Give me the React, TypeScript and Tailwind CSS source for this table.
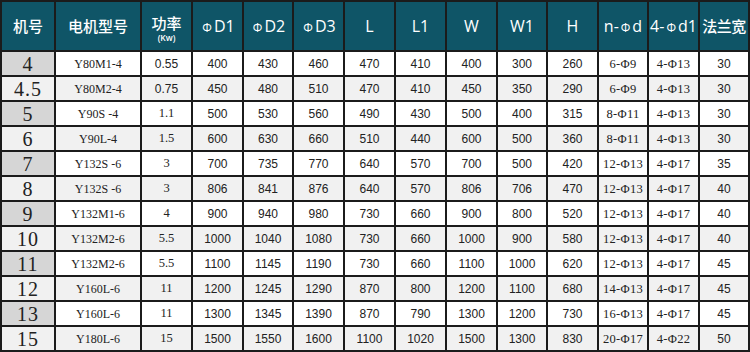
const rows: (string | number)[][] = [
  ["4", "Y80M1-4", "0.55", 400, 430, 460, 470, 410, 400, 300, 260, "6-Φ9", "4-Φ13", 30],
  ["4.5", "Y80M2-4", "0.75", 450, 480, 510, 470, 410, 450, 350, 290, "6-Φ9", "4-Φ13", 30],
  ["5", "Y90S -4", "1.1", 500, 530, 560, 490, 430, 500, 400, 315, "8-Φ11", "4-Φ13", 30],
  ["6", "Y90L-4", "1.5", 600, 630, 660, 510, 440, 600, 500, 360, "8-Φ11", "4-Φ13", 30],
  ["7", "Y132S -6", "3", 700, 735, 770, 640, 570, 700, 500, 420, "12-Φ13", "4-Φ17", 35],
  ["8", "Y132S -6", "3", 806, 841, 876, 640, 570, 806, 706, 470, "12-Φ13", "4-Φ17", 40],
  ["9", "Y132M1-6", "4", 900, 940, 980, 730, 660, 900, 800, 520, "12-Φ13", "4-Φ17", 40],
  ["10", "Y132M2-6", "5.5", 1000, 1040, 1080, 730, 660, 1000, 900, 580, "12-Φ13", "4-Φ17", 40],
  ["11", "Y132M2-6", "5.5", 1100, 1145, 1190, 730, 660, 1100, 1000, 620, "12-Φ13", "4-Φ17", 45],
  ["12", "Y160L-6", "11", 1200, 1245, 1290, 870, 800, 1200, 1100, 680, "14-Φ13", "4-Φ17", 45],
  ["13", "Y160L-6", "11", 1300, 1345, 1390, 870, 790, 1300, 1200, 730, "16-Φ13", "4-Φ17", 45],
  ["15", "Y180L-6", "15", 1500, 1550, 1600, 1100, 1020, 1500, 1300, 830, "20-Φ17", "4-Φ22", 50],
];

const widths = [54, 86, 51, 51, 50, 51, 51, 51, 51, 50, 51, 50, 51, 50];

// [prefix, rest] — the Φ is drawn thinner than the letters in the picture
const heads: [string, string][] = [
  ["Φ", "D1"], ["Φ", "D2"], ["Φ", "D3"], ["", "L"], ["", "L1"], ["", "W"], ["", "W1"], ["", "H"],
  ["n-Φ", "d"], ["4-Φ", "d1"],
];

const serif = "font-['Liberation_Serif','Noto_Sans_CJK_SC',serif]";
const sans = "font-['Liberation_Sans',sans-serif]";

function cellClass(ci: number, ri: number) {
  if (ci === 0) return `${serif} text-[20px] tracking-[1px] ${ri % 2 === 0 ? "bg-[#d6d6d6]" : ""}`;
  if (ci === 1) return `${serif} text-[12px]`;
  if (ci === 2) return ri < 2 ? `${sans} text-[12px]` : `${serif} text-[12.5px]`;
  if (ci === 11 || ci === 12) return `${serif} text-[12.5px] tracking-[0.3px] pt-[2px]`;
  return `${sans} text-[12px]`;
}

export default function App() {
  return (
    <div className="w-[750px] h-[352px] bg-white overflow-hidden">
      <table className="w-[750px] table-fixed border-collapse border-2 border-[#1b1b1b] text-center text-[#222]">
        <colgroup>
          {widths.map((w, i) => (
            <col key={i} style={{ width: w }} />
          ))}
        </colgroup>
        <thead>
          <tr className="h-[50px] bg-[#0f5567] text-white font-['Open_Sans','Noto_Sans_CJK_SC',sans-serif]">
            <th className="border-2 border-[#1b1b1b] text-[15px] font-medium">机号</th>
            <th className="border-2 border-[#1b1b1b] text-[15px] font-medium">电机型号</th>
            <th className="border-2 border-[#1b1b1b] font-medium pt-[4px]">
              <div className="text-[15px] leading-[18px]">功率</div>
              <div className="text-[8.5px] leading-[9px] mt-[1px] font-semibold">(Kw)</div>
            </th>
            {heads.map(([p, h]) => (
              <th key={p + h} className="border-2 border-[#1b1b1b] text-[16px] font-medium whitespace-nowrap">
                {p.replace("Φ", "")}
                {p.includes("Φ") && <span className="text-[12px] font-normal mx-[2px]">Φ</span>}
                {h}
              </th>
            ))}
            <th className="border-2 border-[#1b1b1b] text-[15px] font-medium whitespace-nowrap tracking-[-0.5px]">法兰宽</th>
          </tr>
        </thead>
        <tbody>
          {rows.map((r, ri) => (
            <tr key={ri} className={`h-[25px] ${ri % 2 === 1 ? "bg-[#f1f1f1]" : "bg-white"}`}>
              {r.map((v, ci) => (
                <td key={ci} className={`border-2 border-[#1b1b1b] p-0 leading-none whitespace-nowrap ${cellClass(ci, ri)}`}>
                  {v}
                </td>
              ))}
            </tr>
          ))}
        </tbody>
      </table>
    </div>
  );
}
